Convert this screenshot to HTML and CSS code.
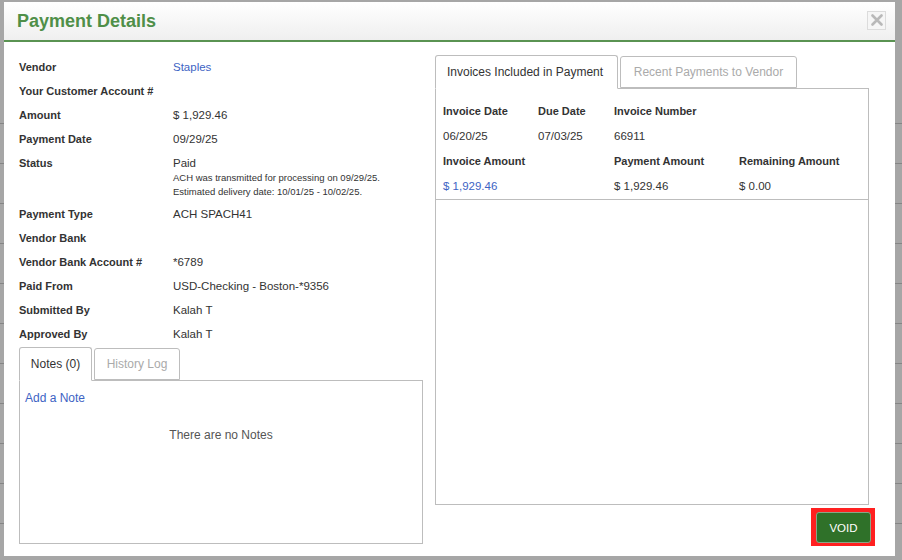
FILE: index.html
```html
<!DOCTYPE html>
<html lang="en">
<head>
  <meta charset="UTF-8">
  <title>Payment Details</title>
  <link rel="stylesheet" href="styles.css">
</head>
<body>
  <!-- page underneath the overlay -->
  <div class="page">
    <div class="page-row"></div>
    <div class="page-row"></div>
    <div class="page-row"></div>
    <div class="page-row"></div>
    <div class="page-row"></div>
    <div class="page-row"></div>
    <div class="page-row"></div>
    <div class="page-row"></div>
    <div class="page-row"></div>
    <div class="page-row"></div>
    <div class="page-row"></div>
    <div class="page-row"></div>
  </div>
  <div class="overlay"></div>

  <div class="modal">
    <div class="modal-header">
      <h1>Payment Details</h1>
      <button class="close-btn" aria-label="Close">
        <svg width="12" height="12" viewBox="0 0 12 12"><path d="M1.5 1.5 L10.5 10.5 M10.5 1.5 L1.5 10.5" stroke="#b9b9b9" stroke-width="2.6" stroke-linecap="round"/></svg>
      </button>
    </div>

    <div class="modal-body">
      <div class="left-col">
        <div class="details">
          <div class="d-row"><span class="d-label">Vendor</span><span class="d-value"><a href="#">Staples</a></span></div>
          <div class="d-row"><span class="d-label">Your Customer Account #</span><span class="d-value"></span></div>
          <div class="d-row"><span class="d-label">Amount</span><span class="d-value">$ 1,929.46</span></div>
          <div class="d-row"><span class="d-label">Payment Date</span><span class="d-value">09/29/25</span></div>
          <div class="d-row status-row">
            <span class="d-label">Status</span>
            <span class="d-value">Paid
              <span class="status-note">ACH was transmitted for processing on 09/29/25.<br>Estimated delivery date: 10/01/25 - 10/02/25.</span>
            </span>
          </div>
          <div class="d-row"><span class="d-label">Payment Type</span><span class="d-value">ACH SPACH41</span></div>
          <div class="d-row"><span class="d-label">Vendor Bank</span><span class="d-value"></span></div>
          <div class="d-row"><span class="d-label">Vendor Bank Account #</span><span class="d-value">*6789</span></div>
          <div class="d-row"><span class="d-label">Paid From</span><span class="d-value">USD-Checking - Boston-*9356</span></div>
          <div class="d-row"><span class="d-label">Submitted By</span><span class="d-value">Kalah T</span></div>
          <div class="d-row"><span class="d-label">Approved By</span><span class="d-value">Kalah T</span></div>
        </div>

        <div class="tabs">
          <span class="tab active notes-tab">Notes (0)</span>
          <span class="tab history-tab">History Log</span>
        </div>
        <div class="tab-panel notes-panel">
          <a href="#" class="add-note">Add a Note</a>
          <p class="empty">There are no Notes</p>
        </div>
      </div>

      <div class="right-col">
        <div class="tabs">
          <span class="tab active inv-tab">Invoices Included in Payment</span>
          <span class="tab recent-tab">Recent Payments to Vendor</span>
        </div>
        <div class="tab-panel invoice-panel">
          <div class="inv-grid">
            <span class="th">Invoice Date</span>
            <span class="th">Due Date</span>
            <span class="th">Invoice Number</span>
            <span></span>
            <span>06/20/25</span>
            <span>07/03/25</span>
            <span>66911</span>
            <span></span>
            <span class="th">Invoice Amount</span>
            <span></span>
            <span class="th">Payment Amount</span>
            <span class="th">Remaining Amount</span>
            <span><a href="#">$ 1,929.46</a></span>
            <span></span>
            <span>$ 1,929.46</span>
            <span>$ 0.00</span>
          </div>
        </div>
        <div class="actions">
          <span class="void-ring"><button class="void-btn">VOID</button></span>
        </div>
      </div>
    </div>
  </div>
</body>
</html>
```

FILE: styles.css
```css
body { margin: 0; background: #a6a6a6; font-family: "Liberation Sans", Arial, sans-serif; color: #333; overflow: hidden;}
a { color: #3d63c4; text-decoration: none;}

.page { padding-top: 84px; background: #fff;}
.page-row { height: 39px; border-bottom: 1px solid #ccc;}
.overlay { position: fixed; top: 0; left: 0; right: 0; bottom: 0; background: rgba(0,0,0,0.35);}

.modal { position: fixed; top: 2px; left: 4px; width: 891px; height: 554px; background: #fff; display: flex; flex-direction: column;}
.modal-header { height: 38px; border-bottom: 2px solid #5a9352; background: linear-gradient(#ffffff, #efefef); display: flex; align-items: center; padding: 0 9px 0 13px;}
.modal-header h1 { margin: 0; font-size: 18px; font-weight: bold; color: #4f8f48; flex: 1; padding-top: 1px;}
.close-btn { width: 19px; height: 19px; border: 1px solid #dcdcdc; background: #f6f6f6; padding: 0; display: flex; align-items: center; justify-content: center; margin-top: -2px;}

.modal-body { display: grid; grid-template-columns: 404px 434px; column-gap: 12px; padding: 13px 24px 0 15px;}
.left-col, .right-col { display: flex; flex-direction: column;}

.d-row { display: flex; line-height: 24px; font-size: 11.5px;}
.d-label { width: 154px; flex: none; font-weight: bold; font-size: 11px; color: #333;}
.d-value { flex: 1;}
.status-row { padding-bottom: 3px;}
.status-note { display: block; font-size: 9.5px; line-height: 14px; margin-top: -4px;}

.tabs { display: flex; gap: 2px; height: 33px; position: relative; z-index: 1;}
.left-col .tabs { margin-top: 1px;}
.tab { box-sizing: border-box; height: 33px; border: 1px solid #bdbdbd; border-radius: 3px 3px 0 0; font-size: 12px; line-height: 32px; color: #aaa; background: #fff; padding: 0 12px;}
.tab.active { color: #333; border-bottom-color: #fff; height: 34px;}
.notes-tab { width: 73px; padding: 0; text-align: center;}
.history-tab { width: 86px; padding: 0; text-align: center; height: 32px; margin-top: 1px; line-height: 30px;}
.inv-tab { width: 183px; padding-left: 11px;}
.recent-tab { width: 177px; text-align: center; padding: 0; height: 32px; margin-top: 1px; line-height: 30px;}

.tab-panel { box-sizing: border-box; border: 1px solid #bdbdbd;}
.notes-panel { height: 164px; padding: 8px 5px; font-size: 12px;}
.add-note { display: block; line-height: 18px;}
.empty { text-align: center; color: #555; margin: 21px 0 0;}

.invoice-panel { height: 417px;}
.inv-grid { display: grid; grid-template-columns: 95px 76px 125px 1fr; grid-auto-rows: 25px; align-items: center; padding: 9px 7px 1px; font-size: 11.5px; border-bottom: 1px solid #bdbdbd; height: 100px; box-sizing: content-box;}
.inv-grid .th { font-weight: bold; font-size: 11px;}

.actions { display: flex; justify-content: flex-end; margin-top: 3px; margin-right: -6px;}
.void-ring { display: flex; background: #ff2020; padding: 4px 4px 3px 5px;}
.void-btn { width: 55px; height: 31px; background: #2f7129; color: #fff; border: 1px solid #8aa686; border-radius: 3px; font-family: inherit; font-size: 11.5px; padding: 0;}
```
